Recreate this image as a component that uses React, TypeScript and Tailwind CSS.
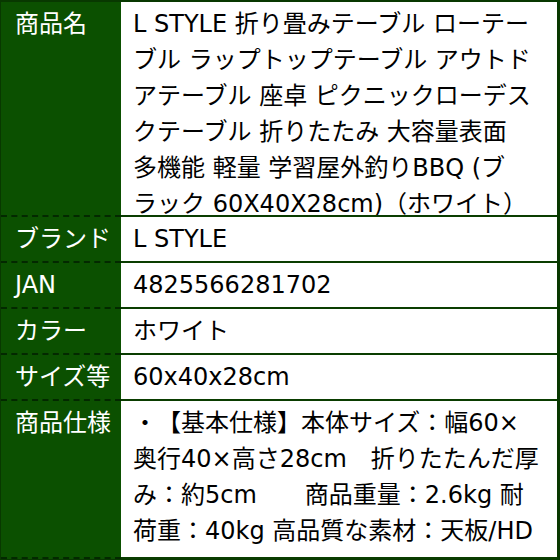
import React from "react";

type Row = { label: string; left: string; right: string; lines: string[] };

const rows: Row[] = [
  {
    label: "商品名",
    left: "h-[215px]",
    right: "h-[215px]",
    lines: [
      "L STYLE 折り畳みテーブル ローテー",
      "ブル ラップトップテーブル アウトド",
      "アテーブル 座卓 ピクニックローデス",
      "クテーブル 折りたたみ 大容量表面",
      "多機能 軽量 学習屋外釣りBBQ (ブ",
      "ラック 60X40X28cm)（ホワイト）",
    ],
  },
  { label: "ブランド", left: "h-[46px]", right: "h-[46px]", lines: ["L STYLE"] },
  { label: "JAN", left: "h-[46px]", right: "h-[46px]", lines: ["4825566281702"] },
  { label: "カラー", left: "h-[46px]", right: "h-[46px]", lines: ["ホワイト"] },
  { label: "サイズ等", left: "h-[46px]", right: "h-[46px]", lines: ["60x40x28cm"] },
  {
    label: "商品仕様",
    left: "h-[158px]",
    right: "h-[158px]",
    lines: [
      "・【基本仕様】本体サイズ：幅60×",
      "奥行40×高さ28cm　折りたたんだ厚",
      "み：約5cm　　商品重量：2.6kg 耐",
      "荷重：40kg 高品質な素材：天板/HD",
    ],
  },
];

export default function App() {
  return (
    <div className="w-[560px] h-[560px] overflow-hidden bg-[#083800] pt-[2px] pl-[1px] pr-[3px] font-['DejaVu_Sans','Noto_Sans_CJK_JP',sans-serif] text-[24px] leading-[36px] [text-spacing-trim:space-all]">
      {rows.map((r) => (
        <div key={r.label} className="flex">
          <div
            className={`${r.left} w-[120px] shrink-0 bg-[#0b5000] border-b-2 border-dashed border-[#032800] pl-[14px] pt-[4px] text-white whitespace-nowrap`}
          >
            {r.label}
          </div>
          <div
            className={`${r.right} flex-1 overflow-hidden bg-white border-b-2 border-[#0a3d00] pl-[12px] pt-[4px] text-black`}
          >
            {r.lines.map((l, i) => (
              <div key={i} className="whitespace-pre">
                {l}
              </div>
            ))}
          </div>
        </div>
      ))}
    </div>
  );
}
